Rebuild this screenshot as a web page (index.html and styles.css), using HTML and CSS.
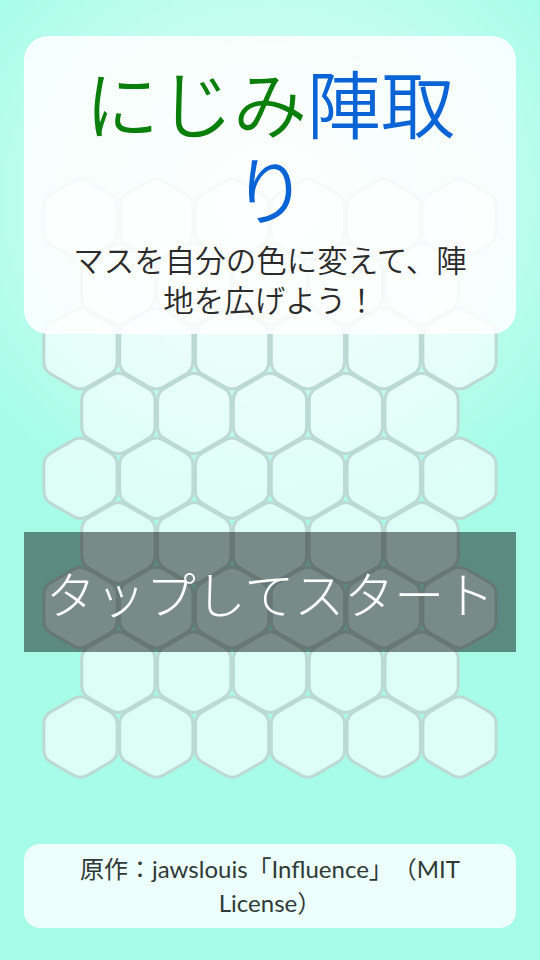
FILE: index.html
```html
<!DOCTYPE html>
<html lang="ja">
<head>
  <meta charset="UTF-8">
  <meta name="viewport" content="width=device-width, initial-scale=1.0">
  <title>にじみ陣取り</title>
  <link rel="stylesheet" href="styles.css">
</head>
<body>

  <svg class="board" viewBox="0 0 540 960" width="540" height="960" aria-hidden="true">
    <defs>
      <path id="hex" d="M6.93 -38.3 L29.7 -25.15 Q36.63 -21.15 36.63 -13.15 L36.63 13.15 Q36.63 21.15 29.7 25.15 L6.93 38.3 Q0 42.3 -6.93 38.3 L-29.7 25.15 Q-36.63 21.15 -36.63 13.15 L-36.63 -13.15 Q-36.63 -21.15 -29.7 -25.15 L-6.93 -38.3 Q0 -42.3 6.93 -38.3 Z"/>
    </defs>
    <g class="cells">
      <!-- row 0 -->
      <use href="#hex" x="80.5" y="219.4"/><use href="#hex" x="156.3" y="219.4"/><use href="#hex" x="232.1" y="219.4"/>
      <use href="#hex" x="307.9" y="219.4"/><use href="#hex" x="383.7" y="219.4"/><use href="#hex" x="459.5" y="219.4"/>
      <!-- row 1 -->
      <use href="#hex" x="118.4" y="284.1"/><use href="#hex" x="194.2" y="284.1"/><use href="#hex" x="270" y="284.1"/>
      <use href="#hex" x="345.8" y="284.1"/><use href="#hex" x="421.6" y="284.1"/>
      <!-- row 2 -->
      <use href="#hex" x="80.5" y="348.8"/><use href="#hex" x="156.3" y="348.8"/><use href="#hex" x="232.1" y="348.8"/>
      <use href="#hex" x="307.9" y="348.8"/><use href="#hex" x="383.7" y="348.8"/><use href="#hex" x="459.5" y="348.8"/>
      <!-- row 3 -->
      <use href="#hex" x="118.4" y="413.5"/><use href="#hex" x="194.2" y="413.5"/><use href="#hex" x="270" y="413.5"/>
      <use href="#hex" x="345.8" y="413.5"/><use href="#hex" x="421.6" y="413.5"/>
      <!-- row 4 -->
      <use href="#hex" x="80.5" y="478.2"/><use href="#hex" x="156.3" y="478.2"/><use href="#hex" x="232.1" y="478.2"/>
      <use href="#hex" x="307.9" y="478.2"/><use href="#hex" x="383.7" y="478.2"/><use href="#hex" x="459.5" y="478.2"/>
      <!-- row 5 -->
      <use href="#hex" x="118.4" y="542.9"/><use href="#hex" x="194.2" y="542.9"/><use href="#hex" x="270" y="542.9"/>
      <use href="#hex" x="345.8" y="542.9"/><use href="#hex" x="421.6" y="542.9"/>
      <!-- row 6 -->
      <use href="#hex" x="80.5" y="607.6"/><use href="#hex" x="156.3" y="607.6"/><use href="#hex" x="232.1" y="607.6"/>
      <use href="#hex" x="307.9" y="607.6"/><use href="#hex" x="383.7" y="607.6"/><use href="#hex" x="459.5" y="607.6"/>
      <!-- row 7 -->
      <use href="#hex" x="118.4" y="672.3"/><use href="#hex" x="194.2" y="672.3"/><use href="#hex" x="270" y="672.3"/>
      <use href="#hex" x="345.8" y="672.3"/><use href="#hex" x="421.6" y="672.3"/>
      <!-- row 8 -->
      <use href="#hex" x="80.5" y="737"/><use href="#hex" x="156.3" y="737"/><use href="#hex" x="232.1" y="737"/>
      <use href="#hex" x="307.9" y="737"/><use href="#hex" x="383.7" y="737"/><use href="#hex" x="459.5" y="737"/>
    </g>
  </svg>

  <div class="screen">
    <div class="title-card">
      <h1 class="title"><span class="title-green">にじみ</span><span class="title-blue">陣取り</span></h1>
      <p class="lead">マスを自分の色に変えて、陣地を広げよう！</p>
    </div>

    <div class="start">タップしてスタート</div>

    <footer class="credit">原作：jawslouis「Influence」（MIT License）</footer>
  </div>

</body>
</html>
```

FILE: styles.css
```css
html, body {
  margin: 0;
  padding: 0;
}

body {
  width: 540px;
  height: 960px;
  overflow: hidden;
  position: relative;
  font-family: Lato, "Noto Sans CJK JP", sans-serif;
  color: #333;
  background-color: #a6fce9;
  background-image: radial-gradient(ellipse 360px 330px at 50% 200px, rgba(255, 255, 255, 0.75) 0%, rgba(255, 255, 255, 0) 100%);
  text-spacing-trim: space-all;
}

/* game board sits behind the menu */
.board {
  position: absolute;
  top: 0;
  left: 0;
}

.cells use {
  fill: rgba(255, 255, 255, 0.62);
  stroke: #bcd9d4;
  stroke-width: 3;
}

.screen {
  position: relative;
  z-index: 1;
  height: 960px;
  box-sizing: border-box;
  padding: 36px 24px 32px;
  display: flex;
  flex-direction: column;
}

.title-card {
  background-color: rgba(255, 255, 255, 0.86);
  border-radius: 24px;
  padding: 26px 40px 14px;
  text-align: center;
}

.title {
  margin: 0;
  font-size: 74px;
  line-height: 86px;
  font-weight: 350;
}

.title-green {
  color: #0b7f0b;
}

.title-blue {
  color: #0a64d6;
}

.lead {
  margin: 6px 0 0;
  font-size: 30.5px;
  line-height: 40px;
  font-weight: 350;
  color: #2b2b2b;
}

.start {
  margin-top: 198px;
  height: 120px;
  display: flex;
  justify-content: center;
  align-items: center;
  background-color: rgba(0, 0, 0, 0.45);
  color: #fff;
  font-size: 50px;
  font-weight: 300;
  cursor: pointer;
}

.credit {
  margin-top: auto;
  background-color: rgba(255, 255, 255, 0.8);
  border-radius: 16px;
  padding: 8px 40px;
  text-align: center;
  font-size: 24px;
  line-height: 34px;
  color: #2f3a38;
}
```
